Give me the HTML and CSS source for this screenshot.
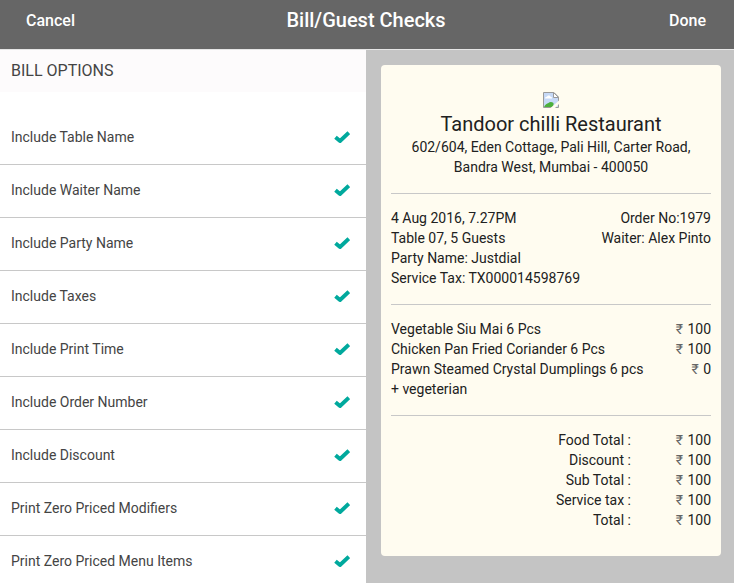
FILE: index.html
```html
<!DOCTYPE html>
<html lang="en">
<head>
<meta charset="utf-8">
<meta name="viewport" content="width=device-width, initial-scale=1">
<title>Bill/Guest Checks</title>
<link rel="stylesheet" href="styles.css">
</head>
<body>
<svg class="defs" aria-hidden="true">
  <symbol id="check" viewBox="0 0 16 12">
    <path d="M1.500 6.200 6 10 14.800 1.800" fill="none" stroke="currentColor" stroke-width="3.900" stroke-linejoin="round"/>
  </symbol>
</svg>
<header class="topbar">
  <button type="button" class="action">Cancel</button>
  <h1 class="title">Bill/Guest Checks</h1>
  <button type="button" class="action action-end">Done</button>
</header>
<main class="panes">
  <section class="options">
    <h2 class="options-title">BILL OPTIONS</h2>
    <div class="option-list">
      <label class="option">Include Table Name<span class="tick"><input type="checkbox" checked><svg><use href="#check"/></svg></span></label>
      <label class="option">Include Waiter Name<span class="tick"><input type="checkbox" checked><svg><use href="#check"/></svg></span></label>
      <label class="option">Include Party Name<span class="tick"><input type="checkbox" checked><svg><use href="#check"/></svg></span></label>
      <label class="option">Include Taxes<span class="tick"><input type="checkbox" checked><svg><use href="#check"/></svg></span></label>
      <label class="option">Include Print Time<span class="tick"><input type="checkbox" checked><svg><use href="#check"/></svg></span></label>
      <label class="option">Include Order Number<span class="tick"><input type="checkbox" checked><svg><use href="#check"/></svg></span></label>
      <label class="option">Include Discount<span class="tick"><input type="checkbox" checked><svg><use href="#check"/></svg></span></label>
      <label class="option">Print Zero Priced Modifiers<span class="tick"><input type="checkbox" checked><svg><use href="#check"/></svg></span></label>
      <label class="option">Print Zero Priced Menu Items<span class="tick"><input type="checkbox" checked><svg><use href="#check"/></svg></span></label>
    </div>
  </section>
  <section class="preview">
    <article class="bill">
      <div class="bill-head">
        <svg class="logo" viewBox="0 0 16 16" aria-hidden="true">
          <path d="M.5.5H11L15.5 5V15.5H.5Z" fill="#c6d9f7"/>
          <path d="M2 6.500C2 5 3.200 4.500 4 4.800 4.500 3 7 3 7.500 4.800 8.700 4.600 9 5.500 9 6.500Z" fill="#fff"/>
          <path d="M1 15C2 12.500 4 11.500 5.500 11 6.500 9.800 9 9.800 10.500 11V15Z" fill="#4caf3c"/>
          <path d="M.5 15.500V.500H11L15.500 5V15.500H.500" fill="none" stroke="#9a9a9a"/>
          <path d="M10.500.500V5.500H15.500Z" fill="#fff" stroke="#9a9a9a"/>
          <path d="M16 8.500V12L12 16H7.500Z" fill="#fffcf0"/>
        </svg>
        <h2 class="restaurant">Tandoor chilli Restaurant</h2>
        <p>602/604, Eden Cottage, Pali Hill, Carter Road, Bandra West, Mumbai - 400050</p>
      </div>
      <div class="bill-part meta">
        <div>
          <p>4 Aug 2016, 7.27PM</p>
          <p>Table 07, 5 Guests</p>
          <p>Party Name: Justdial</p>
          <p>Service Tax: TX000014598769</p>
        </div>
        <div class="meta-end">
          <p>Order No:1979</p>
          <p>Waiter: Alex Pinto</p>
        </div>
      </div>
      <div class="bill-part">
        <table class="items">
          <tr><td>Vegetable Siu Mai 6 Pcs</td><td class="price"><span class="rupee">₹</span> 100</td></tr>
          <tr><td>Chicken Pan Fried Coriander 6 Pcs</td><td class="price"><span class="rupee">₹</span> 100</td></tr>
          <tr><td>Prawn Steamed Crystal Dumplings 6 pcs + vegeterian</td><td class="price"><span class="rupee">₹</span> 0</td></tr>
        </table>
      </div>
      <div class="bill-part">
        <table class="totals">
          <tr><th scope="row">Food Total :</th><td class="price"><span class="rupee">₹</span> 100</td></tr>
          <tr><th scope="row">Discount :</th><td class="price"><span class="rupee">₹</span> 100</td></tr>
          <tr><th scope="row">Sub Total :</th><td class="price"><span class="rupee">₹</span> 100</td></tr>
          <tr><th scope="row">Service tax :</th><td class="price"><span class="rupee">₹</span> 100</td></tr>
          <tr><th scope="row">Total :</th><td class="price"><span class="rupee">₹</span> 100</td></tr>
        </table>
      </div>
    </article>
  </section>
</main>
</body>
</html>
```
FILE: styles.css
```css
* {
  box-sizing: border-box;
}

body {
  margin: 0;
  height: 100vh;
  display: flex;
  flex-direction: column;
  overflow: hidden;
  font: 14px/20px Roboto, sans-serif;
  color: #212121;
  background: #fff;
}

h1, h2, p {
  margin: 0;
}

.defs {
  display: none;
}

.topbar {
  display: grid;
  grid-template-columns: 1fr auto 1fr;
  align-items: center;
  padding: 4px 26px 13px 24px;
  background: #666;
  color: #fff;
  border-bottom: 1px solid #e6e6e6;
}

.title {
  font-size: 20px;
  line-height: 24px;
  font-weight: 500;
}

.action {
  justify-self: start;
  padding: 5px 2px 3px;
  border: 0;
  background: none;
  color: inherit;
  font: 500 16px/24px Roboto, sans-serif;
  cursor: pointer;
}

.action-end {
  justify-self: end;
}

.panes {
  flex: 1;
  min-height: 0;
  display: grid;
  grid-template-columns: 1fr 1fr;
}

.options {
  min-height: 0;
  overflow-y: auto;
  scrollbar-width: none;
  border-right: 1px solid #c4c4c4;
  color: #444;
}

.options-title {
  padding: 11px;
  background: #fdfbfc;
  font-size: 16px;
  line-height: 20px;
  font-weight: 400;
}

.option-list {
  padding-top: 20px;
}

.option {
  display: flex;
  justify-content: space-between;
  align-items: center;
  padding: 15px 16px 17px 11px;
  border-bottom: 1px solid #c8c8c8;
  cursor: pointer;
}

.tick {
  display: grid;
  color: #00a99d;
}

.tick > * {
  grid-area: 1 / 1;
  width: 16px;
  height: 12px;
}

.tick input {
  appearance: none;
  margin: 0;
}

.tick input:not(:checked) + svg {
  visibility: hidden;
}

.preview {
  min-height: 0;
  overflow-y: auto;
  scrollbar-width: none;
  padding: 15px 13px 15px 14px;
  background: #c4c4c4;
}

.bill {
  padding: 27px 10px 26px;
  border-radius: 4px;
  background: #fffcf0;
}

.bill-head {
  padding: 0 10px 16px;
  text-align: center;
}

.logo {
  display: block;
  width: 16px;
  height: 16px;
  margin: 0 auto;
}

.restaurant {
  padding-top: 3px;
  font-size: 20px;
  line-height: 26px;
  font-weight: 400;
}

.bill-part {
  padding: 14px 0 16px;
  border-top: 1px solid #c8c8c8;
}

.bill-part:last-child {
  padding-bottom: 0;
}

.meta {
  display: flex;
  justify-content: space-between;
}

.meta-end {
  text-align: right;
}

table {
  width: 100%;
  table-layout: fixed;
  border-collapse: collapse;
}

td, th {
  padding: 0;
  font-weight: 400;
  text-align: left;
  vertical-align: top;
}

.items td:first-child {
  width: 80%;
}

.totals th {
  width: 75%;
  text-align: right;
}

.price {
  text-align: right;
}

.rupee {
  margin-right: 1px;
  color: #666;
}
```
